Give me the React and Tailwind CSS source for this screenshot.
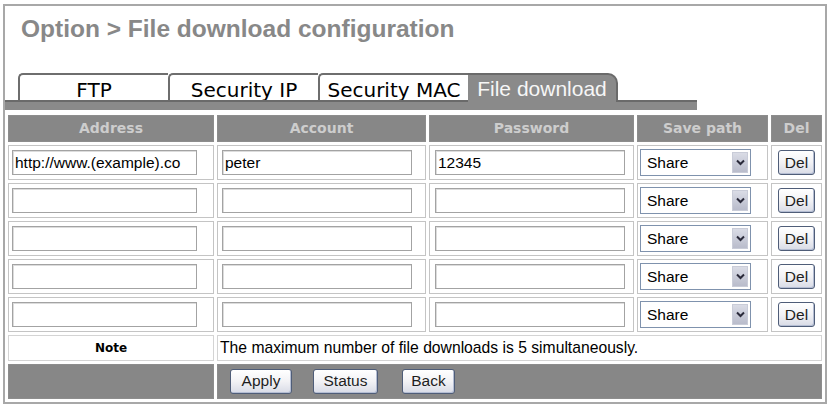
import React from "react";

const Chevron = () => (
  <svg width="9" height="7" viewBox="0 0 9 7">
    <path d="M1 1.5 L4.5 5 L8 1.5" stroke="#2a2a3a" strokeWidth="2" fill="none" />
  </svg>
);

function TextBox({ value, w }) {
  return (
    <div
      className={`h-[25px] ${w} border border-[#a3a3a3] shadow-[inset_1px_1px_0_#dcdcdc] bg-white flex items-center pl-[2px] text-[15.5px] leading-none text-black overflow-hidden whitespace-nowrap`}
    >
      {value}
    </div>
  );
}

function SelectBox() {
  return (
    <div className="h-[27px] w-[111px] border border-[#7f92ad] bg-white flex items-center justify-between pl-[6px] pr-[2px]">
      <span className="text-[15.5px] leading-none text-black">Share</span>
      <div className="w-[16px] h-[21px] bg-gradient-to-b from-[#dadce6] to-[#b9bccb] border border-[#c9ccd8] flex items-center justify-center">
        <Chevron />
      </div>
    </div>
  );
}

function XpButton({ children, w, extra = "" }) {
  return (
    <button
      type="button"
      className={`h-[25px] ${w} ${extra} rounded-[3px] border border-[#4f5d78] bg-gradient-to-b from-[#ffffff] via-[#f2f2f5] to-[#d8dbe6] shadow-[inset_-1px_-1px_0_#b4bdd3] flex items-center justify-center text-[15.5px] leading-none text-[#1e1e1e] font-['Liberation_Sans',Arial,sans-serif]`}
    >
      {children}
    </button>
  );
}

const rows = [
  { addr: "http://www.(example).co", acc: "peter", pw: "12345" },
  { addr: "", acc: "", pw: "" },
  { addr: "", acc: "", pw: "" },
  { addr: "", acc: "", pw: "" },
  { addr: "", acc: "", pw: "" },
];

export default function App() {
  return (
    <div className="w-[829px] h-[406px] bg-white overflow-hidden font-['Liberation_Sans',Arial,sans-serif]">
      <div className="ml-[3px] mt-[4px] w-[824px] border-2 border-[#a8a8a8] flex flex-col">
        <div className="pt-[9px] pl-[16px] h-[36px] text-[24.5px] leading-[28px] font-bold text-[#888888]">
          Option &gt; File download configuration
        </div>
        <div className="mt-[31px] flex flex-col">
          <div className="flex items-end pl-[13px] h-[27px]">
            {["FTP", "Security IP", "Security MAC"].map((t) => (
              <div
                key={t}
                className="w-[150px] h-[27px] bg-white border-t-2 border-l-2 border-[#6e6e6e] rounded-tl-[5px] pt-[5px] text-center text-[20px] leading-[20px] text-black font-['DejaVu_Sans',sans-serif] whitespace-nowrap"
              >
                {t}
              </div>
            ))}
            <div className="relative z-10 w-[150px] h-[29px] -mb-[2px] bg-[#8a8a8a] border-t-2 border-r-2 border-[#6a6a6a] rounded-tr-[10px] pt-[3px] text-center text-[21px] leading-[22px] text-[#f6f6f6] whitespace-nowrap">
              File download
            </div>
          </div>
          <div className="w-[692px] h-[10px] bg-[#8a8a8a] border-t-2 border-[#6a6a6a]" />
        </div>
        <div className="mt-[2px]">
          <table className="table-fixed border-separate border-spacing-[3px] w-[820px]">
            <thead>
              <tr>
                {[
                  ["Address", "w-[206px]"],
                  ["Account", "w-[209px]"],
                  ["Password", "w-[205px]"],
                  ["Save path", "w-[131px]"],
                  ["Del", "w-[51px]"],
                ].map(([h, w]) => (
                  <th
                    key={h}
                    className={`${w} h-[27px] p-0 bg-[#878787] border border-[#8d8d8d] text-[#cdcdcd] text-[14px] font-bold font-['DejaVu_Sans',sans-serif] text-center align-middle`}
                  >
                    {h}
                  </th>
                ))}
              </tr>
            </thead>
            <tbody>
              {rows.map((r, i) => (
                <tr key={i}>
                  <td className="h-[35px] p-0 pl-[3px] border border-[#c4c4c4] align-middle">
                    <TextBox value={r.addr} w="w-[185px]" />
                  </td>
                  <td className="h-[35px] p-0 pl-[4px] border border-[#c4c4c4] align-middle">
                    <TextBox value={r.acc} w="w-[190px]" />
                  </td>
                  <td className="h-[35px] p-0 pl-[5px] border border-[#c4c4c4] align-middle">
                    <TextBox value={r.pw} w="w-[190px]" />
                  </td>
                  <td className="h-[35px] p-0 pl-[2px] border border-[#c4c4c4] align-middle">
                    <SelectBox />
                  </td>
                  <td className="h-[35px] p-0 border border-[#c4c4c4] align-middle">
                    <div className="flex justify-center">
                      <XpButton w="w-[37px]">Del</XpButton>
                    </div>
                  </td>
                </tr>
              ))}
              <tr>
                <td className="h-[25px] p-0 border border-[#d4d4d4] text-center align-middle text-[12px] font-bold text-black font-['DejaVu_Sans',sans-serif]">
                  Note
                </td>
                <td
                  colSpan={4}
                  className="h-[25px] p-0 pl-[2px] border border-[#d4d4d4] align-middle text-[15.7px] text-black whitespace-nowrap"
                >
                  The maximum number of file downloads is 5 simultaneously.
                </td>
              </tr>
              <tr>
                <td className="h-[35px] p-0 bg-[#878787] border border-[#8d8d8d]" />
                <td colSpan={4} className="h-[35px] p-0 pl-[12px] bg-[#878787] border border-[#8d8d8d] align-middle">
                  <div className="flex items-center">
                    <XpButton w="w-[62px]">Apply</XpButton>
                    <XpButton w="w-[65px]" extra="ml-[21px]">Status</XpButton>
                    <XpButton w="w-[53px]" extra="ml-[24px]">Back</XpButton>
                  </div>
                </td>
              </tr>
            </tbody>
          </table>
        </div>
      </div>
    </div>
  );
}
